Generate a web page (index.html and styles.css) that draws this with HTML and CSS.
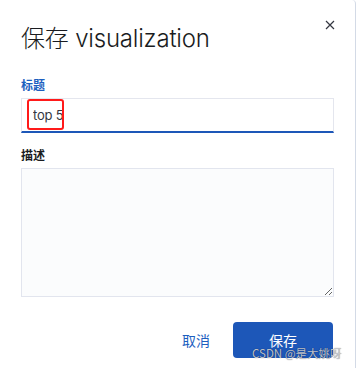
FILE: index.html
```html
<!DOCTYPE html>
<html lang="zh-CN">
<head>
    <meta charset="UTF-8">
    <title>保存 visualization</title>
    <link rel="stylesheet" href="styles.css">
</head>
<body>

<div class="modal">
    <button class="modal-close" type="button" aria-label="关闭">
        <svg width="10" height="10" viewBox="0 0 10 10">
            <path d="M1 1 L9 9 M9 1 L1 9" stroke="#343741" stroke-width="1.2" fill="none"/>
        </svg>
    </button>

    <h1 class="modal-title">保存 visualization</h1>

    <form class="modal-form">
        <div class="form-row">
            <label class="form-label is-focused" for="title">标题</label>
            <div class="input-wrap">
                <input class="form-input" type="text" id="title" value="top 5">
                <span class="mark"></span>
            </div>
        </div>
        <div class="form-row">
            <label class="form-label" for="desc">描述</label>
            <textarea class="form-textarea" id="desc"></textarea>
        </div>
    </form>

    <div class="modal-footer">
        <a class="btn-link" href="#">取消</a>
        <button class="btn-primary" type="button">保存</button>
    </div>

    <div class="watermark">CSDN @是大姚呀</div>
</div>

</body>
</html>
```

FILE: styles.css
```css
body {
    margin: 0;
    background-color: #ffffff;
    font-family: Inter, "Noto Sans CJK SC", sans-serif;
    color: #343741;
}

.modal {
    position: relative;
    width: 356px;
    height: 368px;
    box-sizing: border-box;
    background-color: #ffffff;
    border-right: 1px solid #d3dae6;
    border-top-right-radius: 4px;
    padding: 0 22px 0 21px;
}

.modal-close {
    position: absolute;
    top: 20px;
    right: 20px;
    width: 10px;
    height: 10px;
    padding: 0;
    border: none;
    background: none;
    display: flex;
}

.modal-title {
    margin: 0;
    padding-top: 23px;
    font-size: 24px;
    font-weight: 300;
    line-height: 32px;
    color: #1a1c21;
    letter-spacing: -0.2px;
}

.modal-form {
    margin-top: 23px;
}

.form-row {
    margin-bottom: 15px;
}

.form-label {
    display: block;
    font-size: 12px;
    font-weight: 700;
    line-height: 16px;
    color: #1a1c21;
    margin-bottom: 4px;
}

.form-label.is-focused {
    color: #1d5fbf;
}

.input-wrap {
    position: relative;
}

.form-input {
    display: block;
    width: 313px;
    height: 35px;
    box-sizing: border-box;
    padding: 0 10px 0 11px;
    border: 1px solid #e4e6ee;
    border-bottom: 2px solid #1d57b8;
    background-color: #ffffff;
    font-family: inherit;
    font-size: 13px;
    letter-spacing: -0.2px;
    color: #343741;
    outline: none;
}

.mark {
    position: absolute;
    left: 6px;
    top: 1px;
    width: 37px;
    height: 31px;
    box-sizing: border-box;
    border: 2px solid #ff1a1a;
    border-radius: 3px;
}

.form-textarea {
    display: block;
    width: 313px;
    height: 129px;
    box-sizing: border-box;
    border: 1px solid #e2e5ee;
    background-color: #fbfcfd;
    resize: vertical;
    font-family: inherit;
    font-size: 14px;
    outline: none;
}

.modal-footer {
    display: flex;
    justify-content: flex-end;
    align-items: center;
    gap: 23px;
    margin-top: 25px;
}

.btn-link {
    font-size: 14px;
    color: #1d5fbf;
    text-decoration: none;
}

.btn-primary {
    width: 100px;
    height: 36px;
    border: none;
    border-radius: 4px;
    background-color: #1d57b8;
    color: #ffffff;
    font-family: inherit;
    font-size: 14px;
}

.watermark {
    position: absolute;
    left: 252px;
    top: 345px;
    font-family: "Noto Sans CJK SC", sans-serif;
    font-size: 11.5px;
    color: rgba(210, 212, 218, 0.9);
    text-shadow: 0 0 1px rgba(0, 0, 0, 0.6);
    white-space: nowrap;
}
```
